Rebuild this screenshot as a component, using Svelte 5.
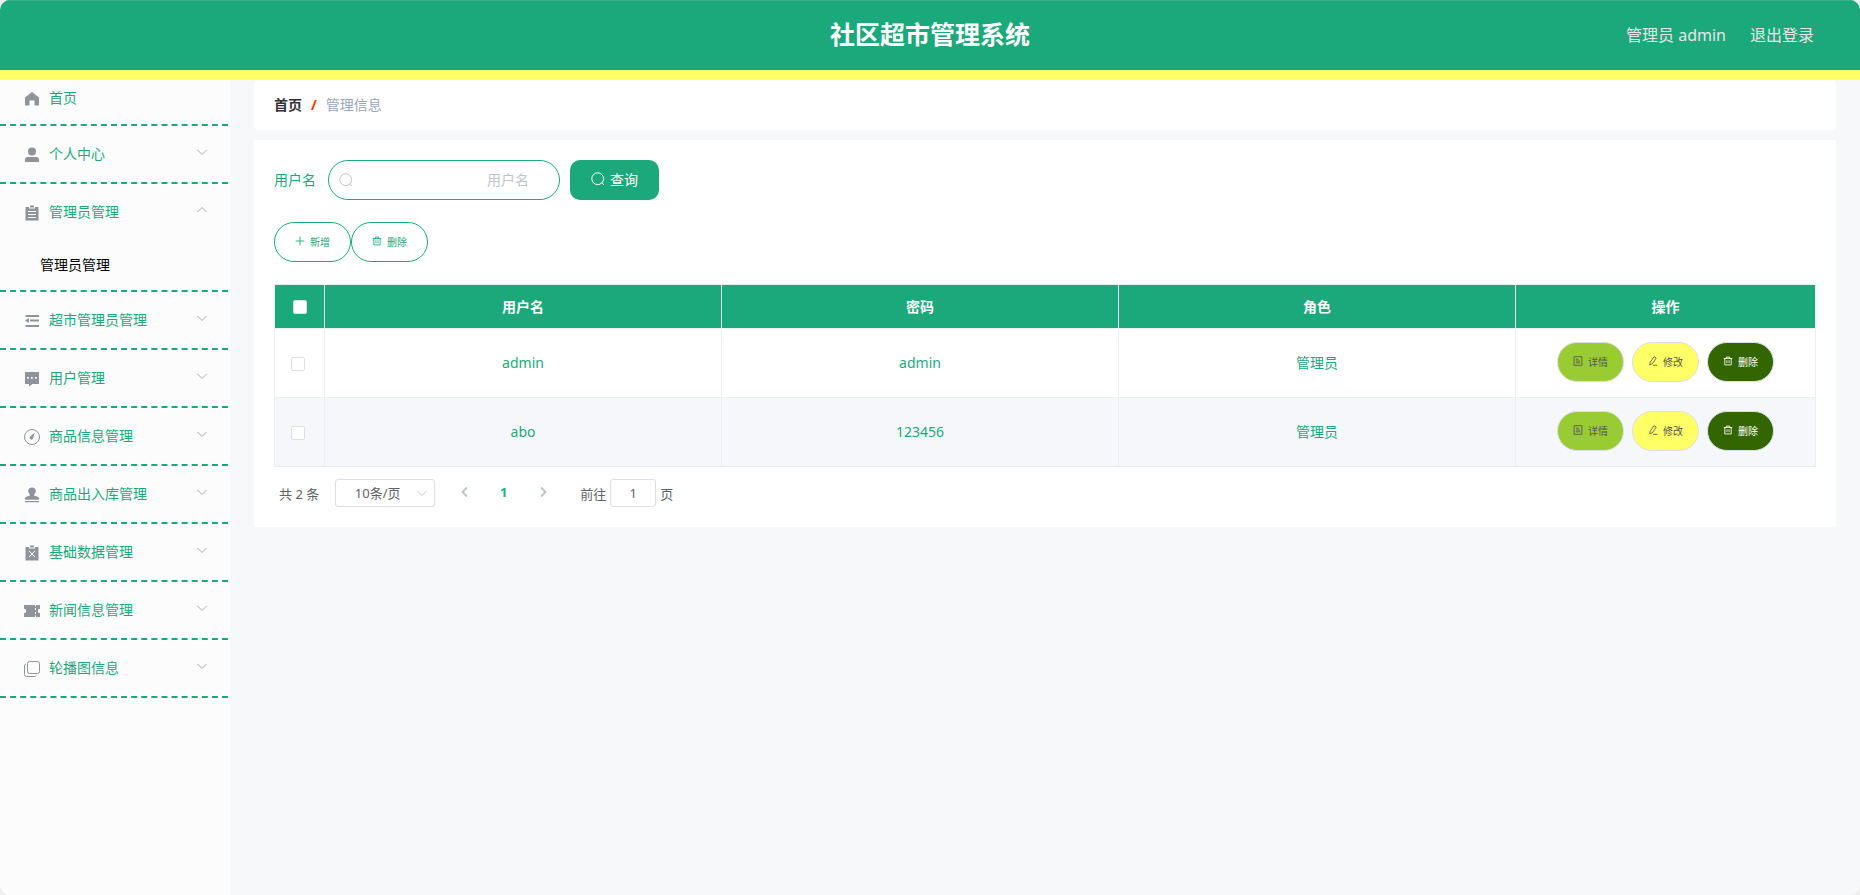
<script>
  let username = "";
  let pageSize = "10";
  let jump = 1;
  let opened = "管理员管理";
  let checked = [];

  const menus = [
    { name: "个人中心", icon: "user" },
    { name: "管理员管理", icon: "order", children: ["管理员管理"] },
    { name: "超市管理员管理", icon: "fold" },
    { name: "用户管理", icon: "chat" },
    { name: "商品信息管理", icon: "discover" },
    { name: "商品出入库管理", icon: "custom" },
    { name: "基础数据管理", icon: "release" },
    { name: "新闻信息管理", icon: "ticket" },
    { name: "轮播图信息", icon: "copy" },
  ];

  const rows = [
    { id: 1, username: "admin", password: "admin", role: "管理员" },
    { id: 2, username: "abo", password: "123456", role: "管理员" },
  ];

  function toggle(name) {
    opened = opened === name ? "" : name;
  }

  function toggleAll() {
    checked = checked.length === rows.length ? [] : rows.map((r) => r.id);
  }
</script>

{#snippet searchIcon()}
  <svg class="icon" viewBox="0 0 14 14" aria-hidden="true">
    <circle cx="6.7" cy="6.7" r="5.9" />
    <path d="M10.8 10.8l2.200 2.200" />
  </svg>
{/snippet}

{#snippet deleteIcon()}
  <svg class="icon" viewBox="0 0 14 14" aria-hidden="true">
    <path d="M1 3.5h12M4.8 3.5v-2h4.4v2M2.5 3.5v9h9v-9M5.5 6v4M8.5 6v4" />
  </svg>
{/snippet}

{#snippet menuIcon(name)}
  <svg class="menu-icon" viewBox="0 0 18 18" aria-hidden="true">
    {#if name === "home"}
      <path d="M9 2L2 7.600V15.500h4.500v-5h5v5H16V7.600z" />
    {:else if name === "user"}
      <circle cx="9" cy="5.500" r="4" />
      <path d="M5 11h8a3 3 0 0 1 3 3v2H2v-2a3 3 0 0 1 3-3z" />
    {:else if name === "order"}
      <path fill-rule="evenodd" d="M2.500 3H6v1.500h6V3h3.500v13.500h-13zM5 7v1h8V7zM5 10v1h8v-1zM5 13v1h8v-1z" />
      <path d="M7 1.500h4V3.500H7z" />
    {:else if name === "fold"}
      <path d="M2.500 3H16v2H2.500zM7 7.600h9v2H7zM2.500 13H16v2H2.500zM2 8.600l4-2.500v5z" />
    {:else if name === "chat"}
      <path fill-rule="evenodd" d="M2 2h14v12H9.500L6 16.500V14H2zM4 7v1.800h1.800V7zM8 7v1.800h1.800V7zM12 7v1.800h1.800V7z" />
    {:else if name === "discover"}
      <circle class="line" cx="9" cy="9" r="7.500" />
      <path d="M11.800 4.500L10 10.300a1.700 1.700 0 1 1-2.800-1.700z" />
    {:else if name === "custom"}
      <path d="M9 1.500a3.800 3.800 0 0 1 3.800 3.800c0 2-1.800 2.700-1.800 4.200l3.500 1.200a2.200 2.200 0 0 1 1.500 2v1H2v-1a2.200 2.200 0 0 1 1.500-2L7 9.500c0-1.500-1.800-2.200-1.800-4.200A3.800 3.800 0 0 1 9 1.500zM2 15h14v1.200H2z" />
    {:else if name === "release"}
      <path d="M2.500 3H6v1.500h6V3h3.500v13.500h-13z" />
      <path d="M7 1.500h4V3.500H7z" />
      <path class="cross" d="M6 7l6 6M12 7l-6 6" />
    {:else if name === "ticket"}
      <path fill-rule="evenodd" d="M1 3h11v1.500h1V3h4v3.800a2.200 2.200 0 0 0 0 4.400V15h-4v-1.500h-1V15H1v-3.800a2.200 2.200 0 0 0 0-4.400zM12 6v2h1V6zM12 10v2h1v-2z" />
    {:else if name === "copy"}
      <rect class="line" x="4.500" y="1.500" width="12" height="12" rx="2" />
      <path class="line" d="M3 4a2 2 0 0 0-1.500 2V14.500a2 2 0 0 0 2 2H11.500a2 2 0 0 0 1.800-1" />
    {/if}
  </svg>
{/snippet}

<div class="app">
  <header>
    <h1>社区超市管理系统</h1>
    <div class="account">
      <span>管理员 admin</span>
      <a href="#logout">退出登录</a>
    </div>
  </header>

  <div class="body">
    <nav>
      <ul>
        <li>
          <a class="menu-title home" href="#home">
            {@render menuIcon("home")}
            <span>首页</span>
          </a>
        </li>
        {#each menus as m}
          <li>
            <button class="menu-title" on:click={() => toggle(m.name)}>
              {@render menuIcon(m.icon)}
              <span>{m.name}</span>
              <svg class="arrow" class:up={m.children && opened === m.name} viewBox="0 0 12 12" aria-hidden="true">
                <path d="M1.500 4L6 8.500 10.500 4" />
              </svg>
            </button>
            {#if m.children && opened === m.name}
              {#each m.children as child}
                <a class="sub-item" href="#list">{child}</a>
              {/each}
            {/if}
          </li>
        {/each}
      </ul>
    </nav>

    <main>
      <div class="breadcrumb">
        <a href="#home">首页</a>
        <i>/</i>
        <span>管理信息</span>
      </div>

      <section class="card">
        <form class="search" on:submit|preventDefault>
          <label for="username">用户名</label>
          <div class="search-input">
            {@render searchIcon()}
            <input id="username" type="text" placeholder="用户名" bind:value={username} />
          </div>
          <button class="btn-search" type="submit">
            {@render searchIcon()}
            查询
          </button>
        </form>

        <div class="actions">
          <button>
            <svg class="icon" viewBox="0 0 14 14" aria-hidden="true"><path d="M7 1v12M1 7h12" /></svg>
            新增
          </button>
          <button>
            {@render deleteIcon()}
            删除
          </button>
        </div>

        <table>
          <colgroup>
            <col class="col-check" />
            <col />
            <col />
            <col />
            <col class="col-ops" />
          </colgroup>
          <thead>
            <tr>
              <th>
                <input type="checkbox" aria-label="全选" checked={checked.length === rows.length} on:change={toggleAll} />
              </th>
              <th>用户名</th>
              <th>密码</th>
              <th>角色</th>
              <th>操作</th>
            </tr>
          </thead>
          <tbody>
            {#each rows as row}
              <tr>
                <td class="check">
                  <input type="checkbox" aria-label={row.username} value={row.id} bind:group={checked} />
                </td>
                <td>{row.username}</td>
                <td>{row.password}</td>
                <td>{row.role}</td>
                <td>
                  <div class="ops">
                    <button class="detail">
                      <svg class="icon" viewBox="0 0 14 14" aria-hidden="true">
                        <path d="M1.500 1h11v12h-11zM4 4.500h4M4 7h6M4 9.500h6" />
                      </svg>
                      详情
                    </button>
                    <button class="edit">
                      <svg class="icon" viewBox="0 0 14 14" aria-hidden="true">
                        <path d="M8.500 1l3 2L6 11l-3.500 1.500L3 9zM7 13h6" />
                      </svg>
                      修改
                    </button>
                    <button class="delete">
                      {@render deleteIcon()}
                      删除
                    </button>
                  </div>
                </td>
              </tr>
            {/each}
          </tbody>
        </table>

        <div class="pagination">
          <span>共 {rows.length} 条</span>
          <div class="size">
            <select aria-label="每页条数" bind:value={pageSize}>
              <option value="10">10条/页</option>
              <option value="20">20条/页</option>
              <option value="50">50条/页</option>
            </select>
            <svg class="arrow" viewBox="0 0 12 12" aria-hidden="true"><path d="M1.500 4L6 8.500 10.500 4" /></svg>
          </div>
          <div class="pager">
            <button class="step" aria-label="上一页" disabled>
              <svg class="icon" viewBox="0 0 12 12" aria-hidden="true"><path d="M8 1.500L3.500 6 8 10.500" /></svg>
            </button>
            <button class="current">1</button>
            <button class="step" aria-label="下一页" disabled>
              <svg class="icon" viewBox="0 0 12 12" aria-hidden="true"><path d="M4 1.500L8.500 6 4 10.500" /></svg>
            </button>
          </div>
          <label class="jump">
            前往
            <input type="text" bind:value={jump} />
            页
          </label>
        </div>
      </section>
    </main>
  </div>
</div>

<style>
  :global(body) {
    background: #eee;
    font-family: "Noto Sans", "Noto Sans CJK SC", sans-serif;
    font-size: 14px;
  }

  .app {
    display: flex;
    flex-direction: column;
    min-height: 100vh;
    border-radius: 10px;
    overflow: hidden;
    background: #f7f8fa;
  }

  * {
    box-sizing: border-box;
  }

  button,
  input,
  select {
    font-family: inherit;
    margin: 0;
  }

  button {
    cursor: pointer;
  }

  a {
    color: inherit;
    text-decoration: none;
  }

  .icon,
  .arrow {
    width: 14px;
    height: 14px;
    fill: none;
    stroke: currentColor;
    flex-shrink: 0;
  }

  header {
    display: grid;
    grid-template-columns: 1fr auto 1fr;
    align-items: center;
    height: 80px;
    padding: 0 46px 2px;
    background: #1ba97b;
    border-bottom: 10px solid #ffff66;
    box-shadow: inset 0 1px #37b189;
  }

  h1 {
    grid-column: 2;
    margin: 0;
    font-size: 25px;
    line-height: 36px;
    color: #fff;
  }

  .account {
    display: flex;
    justify-content: flex-end;
    gap: 24px;
    font-size: 16px;
    color: #e6e6e6;
  }

  .body {
    display: flex;
    flex: 1;
  }

  nav {
    width: 230px;
    flex-shrink: 0;
    padding-right: 2px;
    background: #fcfcfc;
  }

  ul {
    margin: 0;
    padding: 0;
    list-style: none;
  }

  li {
    border-bottom: 2px dashed #1ba97b;
  }

  .menu-title {
    display: flex;
    align-items: center;
    width: 100%;
    height: 56px;
    padding: 0 20px 2px 23px;
    gap: 8px;
    border: none;
    background: none;
    font-size: 14px;
    color: #1ba97b;
    text-align: left;
  }

  .home {
    height: 44px;
    padding-bottom: 10px;
  }

  .menu-icon {
    width: 18px;
    height: 18px;
    margin-top: 4px;
    fill: #909399;
    flex-shrink: 0;
  }

  .menu-icon .line {
    fill: none;
    stroke: #909399;
  }

  .menu-icon .cross {
    stroke: #fcfcfc;
  }

  .menu-title .arrow {
    width: 12px;
    height: 12px;
    margin-left: auto;
    margin-bottom: 2px;
    color: #a8abb0;
  }

  .arrow.up {
    transform: rotate(180deg);
  }

  .sub-item {
    display: block;
    padding: 0 40px;
    line-height: 50px;
    color: #000;
  }

  main {
    flex: 1;
    min-width: 0;
    padding: 0 24px 24px;
  }

  .breadcrumb {
    display: flex;
    align-items: center;
    gap: 9px;
    height: 50px;
    margin-bottom: 10px;
    padding: 0 20px 2px;
    border-radius: 4px;
    background: #fff;
    color: #97a8be;
  }

  .breadcrumb a {
    font-weight: 700;
    color: #303133;
  }

  .breadcrumb i {
    font-style: normal;
    font-weight: 700;
    color: #ff3300;
  }

  .card {
    padding: 20px;
    background: #fff;
  }

  .search {
    display: flex;
    align-items: center;
    gap: 10px;
    margin-bottom: 22px;
    color: #1ba97b;
  }

  .search label {
    padding: 0 2px 2px 0;
  }

  .search-input {
    display: flex;
    align-items: center;
    width: 232px;
    height: 40px;
    padding: 0 30px 0 10px;
    border: 1px solid #1ba97b;
    border-radius: 20px;
    color: #c0c4cc;
  }

  .search-input input {
    flex: 1;
    min-width: 0;
    padding: 0 0 2px;
    border: none;
    outline: none;
    background: none;
    font-size: 14px;
    color: #1ba97b;
    text-align: right;
  }

  ::placeholder {
    color: #c0c4cc;
  }

  .btn-search {
    display: flex;
    align-items: center;
    gap: 5px;
    height: 40px;
    padding: 0 21px 2px;
    border: none;
    border-radius: 10px;
    background: #1ba97b;
    font-size: 14px;
    color: #fff;
  }

  .actions {
    display: flex;
    margin-bottom: 22px;
  }

  .actions button,
  .ops button {
    display: flex;
    align-items: center;
    justify-content: center;
    gap: 5px;
    width: 77px;
    height: 40px;
    padding: 0 0 2px;
    border: 1px solid #1ba97b;
    border-radius: 20px;
    background: #fff;
    font-size: 10px;
    color: #1ba97b;
  }

  .actions .icon,
  .ops .icon {
    width: 10px;
    height: 10px;
    stroke-width: 1.2;
  }

  table {
    width: 100%;
    table-layout: fixed;
    border-collapse: separate;
    border-spacing: 0;
    border: 1px solid #ebeef5;
    border-width: 1px 0 0 1px;
    color: #1ba97b;
    text-align: center;
  }

  .col-check {
    width: 50px;
  }

  .col-ops {
    width: 300px;
  }

  th,
  td {
    height: 69px;
    padding: 0 0 2px;
    border: 1px solid #ebeef5;
    border-width: 0 1px 1px 0;
  }

  th {
    height: 44px;
    background: #1ba97b;
    color: #fff;
  }

  tbody tr:nth-child(even) {
    background: #f5f7fa;
  }

  .check {
    padding-right: 4px;
  }

  input[type="checkbox"] {
    appearance: none;
    display: inline-block;
    width: 14px;
    height: 14px;
    border: 1px solid #dcdfe6;
    border-radius: 2px;
    background: #fff;
    vertical-align: middle;
  }

  input[type="checkbox"]:checked {
    border-color: #1ba97b;
    background: #13ce66;
  }

  .ops {
    display: flex;
    justify-content: center;
    gap: 8px;
  }

  .ops button {
    width: 67px;
    border-color: #dcdfe6;
  }

  .ops .detail {
    background: #99cc33;
    color: #555;
  }

  .ops .edit {
    background: #ffff66;
    color: #555;
  }

  .ops .delete {
    background: #336600;
    color: #fff;
  }

  .pagination {
    display: flex;
    align-items: center;
    height: 28px;
    margin-top: 12px;
    padding-left: 5px;
    font-size: 13px;
    color: #606266;
  }

  .size {
    position: relative;
    margin-left: 16px;
  }

  .size select {
    appearance: none;
    display: block;
    width: 100px;
    height: 28px;
    padding: 0 25px 0 10px;
    border: 1px solid #dcdfe6;
    border-radius: 3px;
    background: #fff;
    font-size: 13px;
    color: #606266;
    text-align: center;
  }

  .size .arrow {
    position: absolute;
    top: 8px;
    right: 7px;
    width: 12px;
    height: 12px;
    color: #c0c4cc;
    pointer-events: none;
  }

  .pager {
    display: flex;
    margin: 0 18px 0 10px;
  }

  .pager button {
    width: 39px;
    height: 28px;
    padding: 0 0 2px;
    border: none;
    background: none;
    font-size: 13px;
  }

  .pager .step {
    color: #c0c4cc;
  }

  .pager .icon {
    display: block;
    width: 12px;
    height: 12px;
    margin: 0 auto;
    stroke-width: 2;
  }

  .pager .current {
    font-weight: 700;
    color: #13b88a;
  }

  .jump {
    display: flex;
    align-items: center;
    gap: 4px;
  }

  .jump input {
    width: 46px;
    height: 28px;
    padding: 0;
    border: 1px solid #dcdfe6;
    border-radius: 3px;
    font-size: 13px;
    color: #606266;
    text-align: center;
  }
</style>
